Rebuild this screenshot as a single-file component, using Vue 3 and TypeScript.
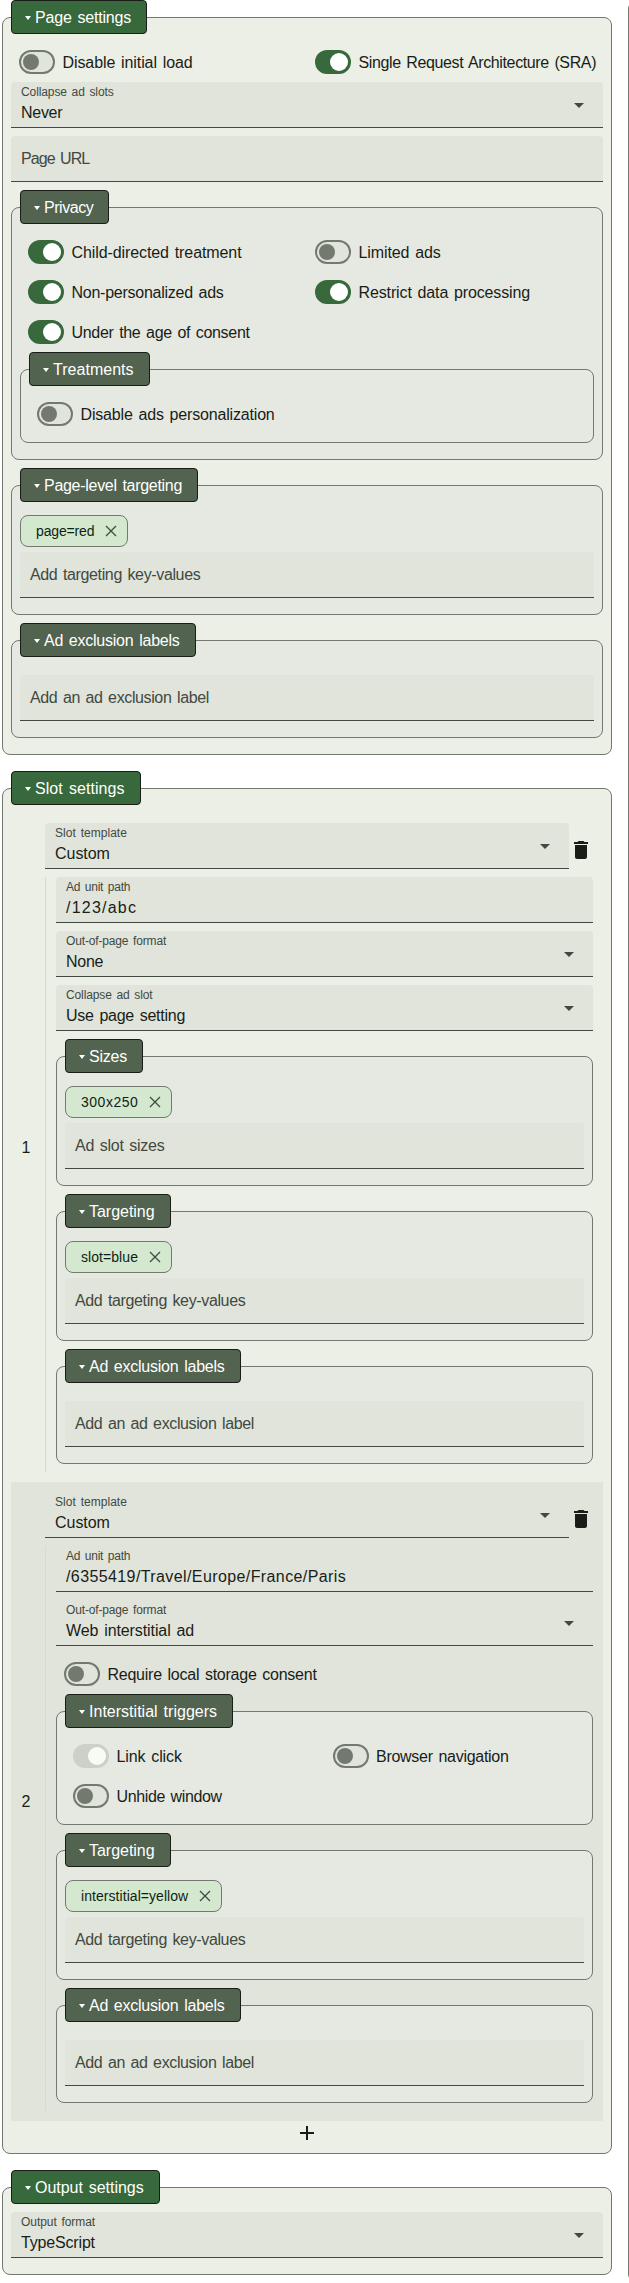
<script setup lang="ts">
import { h, withDirectives, type Directive, type FunctionalComponent } from 'vue'

/** Tracks out a run of text so that it spans the given number of pixels. */
const vFit: Directive<HTMLElement, number> = {
  mounted(el, { value }) {
    const count = (el.textContent ?? '').length
    const natural = el.getBoundingClientRect().width
    el.style.letterSpacing = `${(value + 1.6 - natural) / count}px`
  },
}

const widths: Record<string, number> = {
  'Page settings': 94.5,
  'Slot settings': 88,
  'Output settings': 107,
  'Disable initial load': 128.5,
  'Single Request Architecture (SRA)': 236,
  'Collapse ad slots': 91,
  'Collapse ad slot': 85,
  Never: 39.7,
  'Page URL': 66.8,
  Privacy: 47.7,
  'Child-directed treatment': 168.4,
  'Limited ads': 80.5,
  'Non-personalized ads': 150.5,
  'Restrict data processing': 170,
  'Under the age of consent': 176.5,
  Treatments: 79,
  'Disable ads personalization': 192.5,
  'Page-level targeting': 136.5,
  'page=red': 56.7,
  'Add targeting key-values': 168.7,
  'Ad exclusion labels': 134,
  'Add an ad exclusion label': 177.3,
  'Slot template': 70.3,
  Custom: 53.3,
  'Ad unit path': 62.6,
  '/123/abc': 69.5,
  'Out-of-page format': 98.5,
  None: 35.6,
  'Use page setting': 117.5,
  Sizes: 36.5,
  '300x250': 55.8,
  'Ad slot sizes': 87.8,
  Targeting: 64,
  'slot=blue': 55.4,
  '/6355419/Travel/Europe/France/Paris': 278.5,
  'Web interstitial ad': 126.5,
  'Require local storage consent': 207.5,
  'Interstitial triggers': 126.5,
  'Link click': 63.7,
  'Browser navigation': 131,
  'Unhide window': 103.7,
  'interstitial=yellow': 105.7,
  'Output format': 72.5,
  TypeScript: 72.3,
}

const Txt: FunctionalComponent<{ t: string }> = (props) =>
  withDirectives(h('span', { class: 'txt' }, props.t), [[vFit, widths[props.t]]])
Txt.props = ['t']

type Item =
  | { kind: 'select' | 'input'; label?: string; value: string }
  | { kind: 'switches'; items: { label: string; on?: boolean; disabled?: boolean }[] }
  | { kind: 'group'; title: string; chip?: string; placeholder: string }
  | { kind: 'triggers' }

const targeting: Item = {
  kind: 'group',
  title: 'Targeting',
  chip: 'slot=blue',
  placeholder: 'Add targeting key-values',
}
const exclusions: Item = {
  kind: 'group',
  title: 'Ad exclusion labels',
  placeholder: 'Add an ad exclusion label',
}

const pageGroups = [
  { title: 'Page-level targeting', chip: 'page=red', placeholder: 'Add targeting key-values' },
  { title: 'Ad exclusion labels', chip: '', placeholder: 'Add an ad exclusion label' },
]

const privacy = [
  { label: 'Child-directed treatment', on: true },
  { label: 'Limited ads', on: false },
  { label: 'Non-personalized ads', on: true },
  { label: 'Restrict data processing', on: true },
  { label: 'Under the age of consent', on: true },
]

const triggers = [
  { label: 'Link click', on: true, disabled: true },
  { label: 'Browser navigation', on: false, disabled: false },
  { label: 'Unhide window', on: false, disabled: false },
]

const slots: Item[][] = [
  [
    { kind: 'input', label: 'Ad unit path', value: '/123/abc' },
    { kind: 'select', label: 'Out-of-page format', value: 'None' },
    { kind: 'select', label: 'Collapse ad slot', value: 'Use page setting' },
    { kind: 'group', title: 'Sizes', chip: '300x250', placeholder: 'Ad slot sizes' },
    targeting,
    exclusions,
  ],
  [
    { kind: 'input', label: 'Ad unit path', value: '/6355419/Travel/Europe/France/Paris' },
    { kind: 'select', label: 'Out-of-page format', value: 'Web interstitial ad' },
    { kind: 'switches', items: [{ label: 'Require local storage consent' }] },
    { kind: 'triggers' },
    { ...targeting, chip: 'interstitial=yellow' },
    exclusions,
  ],
]
</script>

<template>
  <div class="page">
    <main class="settings">
      <section class="set top">
        <div class="legend"><i class="tri" /><Txt t="Page settings" /></div>
        <div class="body">
          <div class="switches">
            <label class="row"><span class="switch" /><Txt t="Disable initial load" /></label>
            <label class="row"><span class="switch on" /><Txt t="Single Request Architecture (SRA)" /></label>
          </div>
          <div class="field">
            <div class="label"><Txt t="Collapse ad slots" /></div>
            <div class="value"><Txt t="Never" /></div>
            <i class="arrow" />
          </div>
          <div class="field empty"><Txt t="Page URL" /></div>

          <section class="set">
            <div class="legend"><i class="tri" /><Txt t="Privacy" /></div>
            <div class="body">
              <div class="switches">
                <label v-for="s in privacy" :key="s.label" class="row">
                  <span class="switch" :class="{ on: s.on }" /><Txt :t="s.label" />
                </label>
              </div>
              <section class="set">
                <div class="legend"><i class="tri" /><Txt t="Treatments" /></div>
                <div class="body">
                  <div class="switches">
                    <label class="row"><span class="switch" /><Txt t="Disable ads personalization" /></label>
                  </div>
                </div>
              </section>
            </div>
          </section>

          <section v-for="g in pageGroups" :key="g.title" class="set">
            <div class="legend"><i class="tri" /><Txt :t="g.title" /></div>
            <div class="body">
              <div class="chips" :class="{ filled: g.chip }">
                <div v-if="g.chip" class="chip">
                  <Txt :t="g.chip" />
                  <svg viewBox="0 0 18 18"><path d="M4 4l10 10M14 4L4 14" /></svg>
                </div>
              </div>
              <div class="field empty"><Txt :t="g.placeholder" /></div>
            </div>
          </section>
        </div>
      </section>

      <section class="set top">
        <div class="legend"><i class="tri" /><Txt t="Slot settings" /></div>
        <div class="body">
          <div v-for="(items, n) in slots" :key="n" class="slot">
            <div class="index">{{ n + 1 }}</div>
            <div class="slot-main">
              <div class="slot-head">
                <div class="field">
                  <div class="label"><Txt t="Slot template" /></div>
                  <div class="value"><Txt t="Custom" /></div>
                  <i class="arrow" />
                </div>
                <svg class="trash" viewBox="0 0 24 24">
                  <path d="M6 19c0 1.1.9 2 2 2h8c1.1 0 2-.9 2-2V7H6v12zM19 4h-3.5l-1-1h-5l-1 1H5v2h14V4z" />
                </svg>
              </div>
              <div class="slot-config">
                <template v-for="(item, i) in items" :key="i">
                  <div v-if="item.kind === 'select' || item.kind === 'input'" class="field">
                    <div class="label"><Txt :t="item.label ?? ''" /></div>
                    <div class="value"><Txt :t="item.value" /></div>
                    <i v-if="item.kind === 'select'" class="arrow" />
                  </div>
                  <div v-else-if="item.kind === 'switches'" class="switches single">
                    <label v-for="s in item.items" :key="s.label" class="row">
                      <span class="switch" /><Txt :t="s.label" />
                    </label>
                  </div>
                  <section v-else-if="item.kind === 'triggers'" class="set">
                    <div class="legend"><i class="tri" /><Txt t="Interstitial triggers" /></div>
                    <div class="body">
                      <div class="switches">
                        <label v-for="s in triggers" :key="s.label" class="row">
                          <span class="switch" :class="{ on: s.on, disabled: s.disabled }" /><Txt :t="s.label" />
                        </label>
                      </div>
                    </div>
                  </section>
                  <section v-else class="set">
                    <div class="legend"><i class="tri" /><Txt :t="item.title" /></div>
                    <div class="body">
                      <div class="chips" :class="{ filled: item.chip }">
                        <div v-if="item.chip" class="chip">
                          <Txt :t="item.chip" />
                          <svg viewBox="0 0 18 18"><path d="M4 4l10 10M14 4L4 14" /></svg>
                        </div>
                      </div>
                      <div class="field empty"><Txt :t="item.placeholder" /></div>
                    </div>
                  </section>
                </template>
              </div>
            </div>
          </div>
          <div class="add">
            <svg viewBox="0 0 24 24"><path d="M19 13h-6v6h-2v-6H5v-2h6V5h2v6h6v2z" /></svg>
          </div>
        </div>
      </section>

      <section class="set top">
        <div class="legend"><i class="tri" /><Txt t="Output settings" /></div>
        <div class="body">
          <div class="field">
            <div class="label"><Txt t="Output format" /></div>
            <div class="value"><Txt t="TypeScript" /></div>
            <i class="arrow" />
          </div>
        </div>
      </section>
    </main>
    <div class="preview" />
  </div>
</template>

<style>
body {
  background: #fff;
}
</style>

<style scoped>
.page {
  display: flex;
  width: 629px;
  height: 2283px;
  overflow: hidden;
  font: 16px/24px 'Liberation Sans', Arial, sans-serif;
  color: #191d17;
}
.page * {
  box-sizing: border-box;
}
.page :deep(.txt) {
  display: inline-block;
  white-space: nowrap;
  word-spacing: 1.5px;
}
.settings {
  width: 610px;
  margin-left: 2px;
  flex: none;
}
.preview {
  flex: none;
  width: 12px;
  margin: 4px 0 4px 16px;
  border: 1px solid #72796f;
  border-radius: 4px 0 0 4px;
  box-sizing: border-box;
}

/* Titled group: the title straddles the top border of its body */
.set {
  margin-bottom: 8px;
}
.top {
  margin-bottom: 16px;
}
.legend {
  position: relative;
  display: flex;
  align-items: center;
  width: max-content;
  height: 34px;
  margin-left: 9px;
  padding: 0 15px 0 14px;
  border: 1px solid #191d17;
  border-radius: 4px;
  background: #52634f;
  color: #fff;
}
.legend :deep(.txt) {
  padding-top: 2px;
}
.top > .legend {
  background: #38693c;
}
.tri {
  width: 0;
  margin: 1px 4px 0 -1px;
  border: 3px solid transparent;
  border-top: 4px solid #fff;
  border-bottom: 0;
}
.body {
  margin-top: -17px;
  padding: 24px 8px 8px;
  border: 1px solid #72796f;
  border-radius: 8px;
  background: #e6e9e2;
}
.top > .body {
  background: #ebefe6;
}

.switches {
  display: grid;
  grid-template-columns: 1fr 1fr;
}
.single {
  grid-template-columns: 1fr;
}
.row {
  display: flex;
  align-items: center;
  height: 40px;
  padding-left: 8px;
  white-space: nowrap;
}
.row :deep(.txt) {
  margin-left: 7.5px;
  padding-top: 2px;
}
.switch {
  flex: none;
  display: flex;
  align-items: center;
  width: 36px;
  height: 24px;
  padding-left: 2px;
  border: 2px solid #72796f;
  border-radius: 12px;
  background: #e0e4db;
}
.switch::before {
  content: '';
  width: 16px;
  height: 16px;
  border-radius: 50%;
  background: #72796f;
}
.switch.on {
  padding-left: 13px;
  border-color: #38693c;
  background: #38693c;
}
.switch.on::before {
  width: 18px;
  height: 18px;
  background: #fff;
}
.switch.disabled {
  border-color: #cdd0c9;
  background: #cdd0c9;
}
.switch.disabled::before {
  background: #f7fbf1;
}

.field {
  position: relative;
  height: 46px;
  margin-bottom: 8px;
  padding: 2px 10px 0;
  border-bottom: 1px solid #424940;
  border-radius: 4px 4px 0 0;
  background: #e0e4db;
}
.label {
  height: 16px;
  font-size: 12px;
  line-height: 16px;
  color: #424940;
}
.value {
  height: 25px;
  padding-top: 1px;
}
.label :deep(.txt),
.value :deep(.txt) {
  vertical-align: top;
}
.empty {
  padding-top: 11px;
  color: #424940;
}
.arrow {
  position: absolute;
  right: 19px;
  top: 21px;
  border: 5px solid transparent;
  border-top-color: #424940;
  border-bottom: 0;
}

.chips {
  height: 10px;
}
.chips.filled {
  height: 37px;
  margin-top: 5px;
}
.chip {
  display: flex;
  align-items: center;
  width: max-content;
  height: 32px;
  padding: 0 7px 0 15px;
  border: 1px solid #72796f;
  border-radius: 8px;
  background: #d4e8d0;
  color: #101f10;
  font-size: 14px;
  line-height: 20px;
}
.chip svg {
  width: 18px;
  height: 18px;
  margin-left: 8px;
  fill: none;
  stroke: #424940;
  stroke-width: 1.3;
}

.slot {
  display: flex;
  align-items: stretch;
  padding: 10px 10px 10px 0;
}
.slot:nth-child(even) {
  background: #e0e4db;
}
.index {
  display: flex;
  align-items: center;
  justify-content: center;
  width: 30px;
  margin-right: 4px;
}
.slot-main {
  flex: 1;
}
.slot-head {
  display: flex;
}
.slot-head .field {
  flex: 1;
}
.trash {
  width: 24px;
  height: 24px;
  margin-top: 15px;
  fill: #191d17;
}
.slot-config {
  display: flow-root;
  padding-left: 10px;
  border-left: 1px solid #d5d9d2;
}
.add {
  height: 24px;
}
.add svg {
  display: block;
  width: 24px;
  height: 24px;
  margin: 0 auto;
  fill: #191d17;
}
</style>
